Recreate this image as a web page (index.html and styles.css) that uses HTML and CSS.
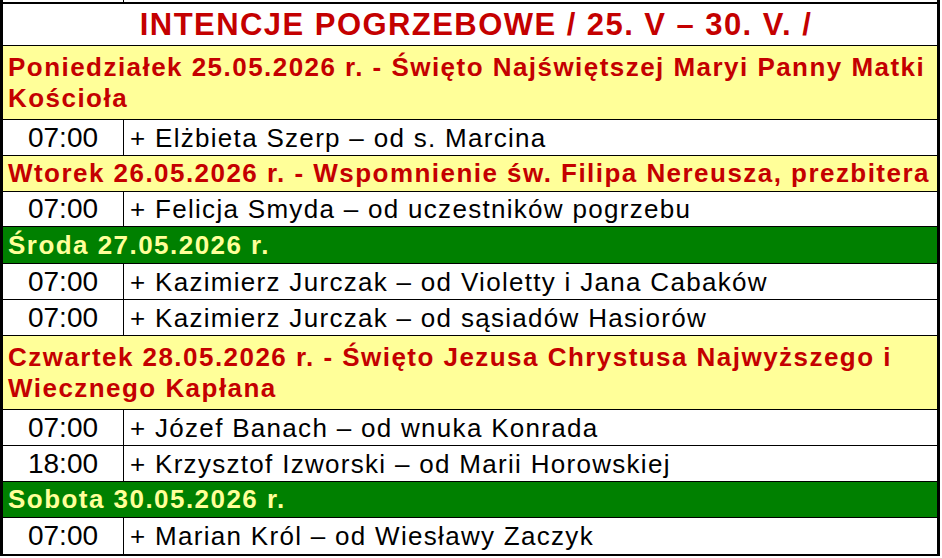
FILE: index.html
```html
<!DOCTYPE html>
<html lang="pl">
<head>
<meta charset="utf-8">
<title>Intencje pogrzebowe</title>
<link rel="stylesheet" href="styles.css">
</head>
<body>
<div class="sheet">
  <div class="row stub"><div class="time"></div><div class="name"></div></div>
  <div class="title">INTENCJE POGRZEBOWE / 25. V – 30. V. /</div>

  <div class="day feast two">Poniedziałek 25.05.2026 r. - Święto Najświętszej Maryi Panny Matki Kościoła</div>
  <div class="row"><div class="time">07:00</div><div class="name">+ Elżbieta Szerp – od s. Marcina</div></div>

  <div class="day feast">Wtorek 26.05.2026 r. - Wspomnienie św. Filipa Nereusza, prezbitera</div>
  <div class="row h35"><div class="time">07:00</div><div class="name">+ Felicja Smyda – od uczestników pogrzebu</div></div>

  <div class="day green h37">Środa 27.05.2026 r.</div>
  <div class="row"><div class="time">07:00</div><div class="name">+ Kazimierz Jurczak – od Violetty i Jana Cabaków</div></div>
  <div class="row"><div class="time">07:00</div><div class="name">+ Kazimierz Jurczak – od sąsiadów Hasiorów</div></div>

  <div class="day feast two">Czwartek 28.05.2026 r. - Święto Jezusa Chrystusa Najwyższego i Wiecznego Kapłana</div>
  <div class="row"><div class="time">07:00</div><div class="name">+ Józef Banach – od wnuka Konrada</div></div>
  <div class="row"><div class="time">18:00</div><div class="name">+ Krzysztof Izworski – od Marii Horowskiej</div></div>

  <div class="day green">Sobota 30.05.2026 r.</div>
  <div class="row last"><div class="time">07:00</div><div class="name">+ Marian Król – od Wiesławy Zaczyk</div></div>
</div>
</body>
</html>
```

FILE: styles.css
```css
html, body {
  margin: 0;
  padding: 0;
  background: #ffffff;
}

.sheet {
  width: 940px;
  box-sizing: border-box;
  border-left: 3px solid #000;
  border-right: 3px solid #000;
  font-family: "Liberation Sans", Arial, sans-serif;
  color: #000;
}

.row {
  display: flex;
  height: 36px;
  box-sizing: border-box;
  border-bottom: 1px solid #000;
  background: #fff;
}

.row.h35 { height: 35px; }

.row.stub {
  height: 2px;
  border-bottom: 0;
}

.row.last {
  height: 38px;
  border-bottom: 2px solid #000;
}

.time {
  flex: 0 0 auto;
  width: 121px;
  box-sizing: border-box;
  border-right: 1px solid #000;
  display: flex;
  align-items: center;
  justify-content: center;
  font-size: 28px;
  line-height: 30px;
}

.name {
  flex: 1 1 auto;
  display: flex;
  align-items: center;
  padding-left: 6px;
  font-size: 26px;
  letter-spacing: 1.3px;
  line-height: 30px;
  white-space: nowrap;
}

.title {
  height: 44px;
  box-sizing: border-box;
  border-top: 2px solid #000;
  border-bottom: 1px solid #000;
  display: flex;
  align-items: center;
  justify-content: center;
  padding-left: 12px;
  font-size: 31px;
  font-weight: bold;
  letter-spacing: 1.45px;
  color: #c40000;
  line-height: 34px;
}

.day {
  height: 36px;
  box-sizing: border-box;
  border-bottom: 1px solid #000;
  display: flex;
  align-items: center;
  padding-left: 5px;
  font-size: 26px;
  font-weight: bold;
  letter-spacing: 1.46px;
  line-height: 30.6px;
}

.day.two { height: 74px; }
.day.h37 { height: 37px; }

.feast {
  background: #ffff99;
  color: #c40000;
}

.green {
  background: #008000;
  color: #ffff99;
}
```
